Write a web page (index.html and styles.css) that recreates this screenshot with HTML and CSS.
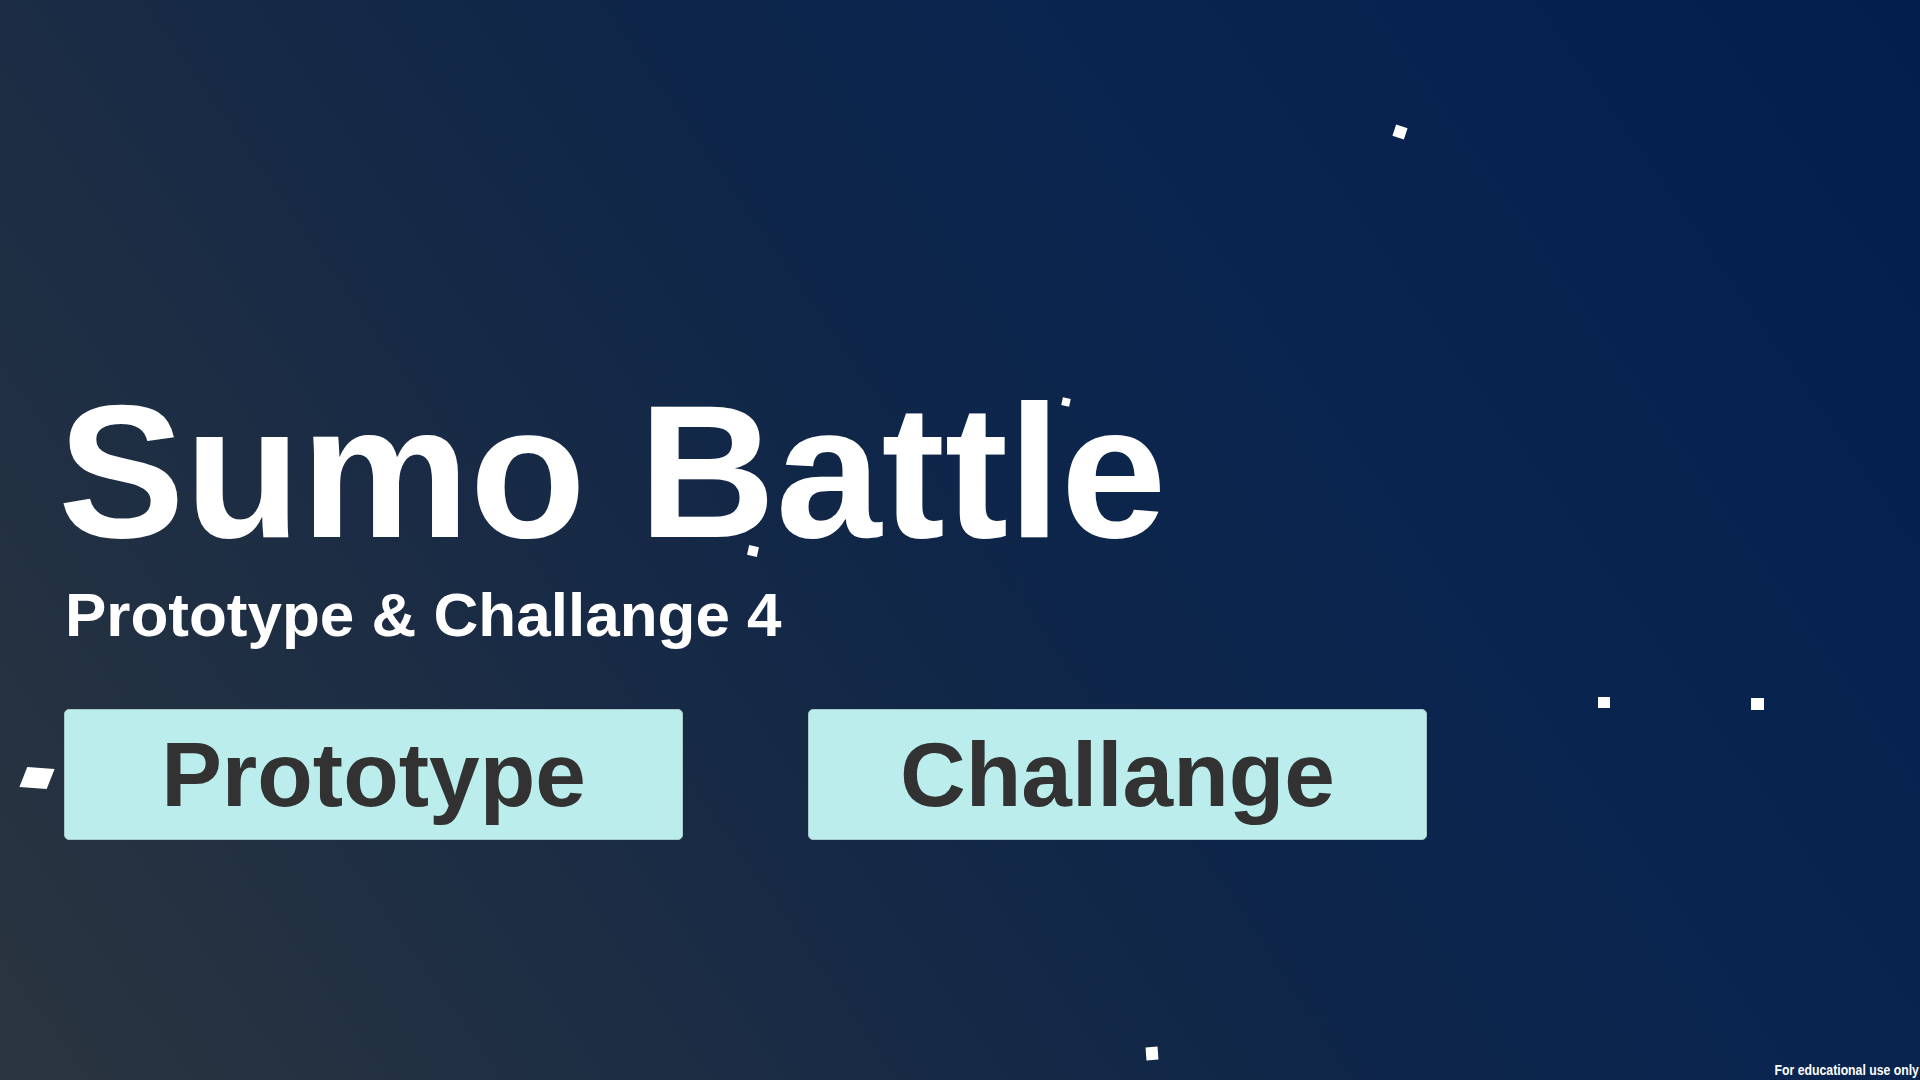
FILE: index.html
```html
<!DOCTYPE html>
<html lang="en">
<head>
<meta charset="utf-8">
<title>Sumo Battle</title>
<link rel="stylesheet" href="styles.css">
</head>
<body>
<div class="screen">
  <main class="menu">
    <h1 class="title">Sumo Battle</h1>
    <p class="subtitle">Prototype &amp; Challange 4</p>
    <div class="buttons">
      <button class="btn">Prototype</button>
      <button class="btn">Challange</button>
    </div>
  </main>

  <span class="particle p1"></span>
  <span class="particle p2"></span>
  <span class="particle p3"></span>
  <span class="particle p4"></span>
  <span class="particle p5"></span>
  <span class="particle p6"></span>
  <span class="particle p7"></span>

  <div class="watermark">For educational use only</div>
</div>
</body>
</html>
```

FILE: styles.css
```css
html, body {
  margin: 0;
  padding: 0;
}

body {
  width: 1920px;
  height: 1080px;
  overflow: hidden;
  font-family: "Liberation Sans", Arial, sans-serif;
}

.screen {
  position: relative;
  width: 1920px;
  height: 1080px;
  background: linear-gradient(55deg, #2a353f 0%, #1b2c44 28%, #0f2649 50%, #0a254f 66%, #021e4d 100%);
}

.menu {
  display: flex;
  flex-direction: column;
  align-items: flex-start;
  padding: 376px 0 0 64px;
}

.title {
  margin: 0 0 0 -6px;
  font-size: 190px;
  line-height: 1;
  font-weight: 700;
  color: #ffffff;
  white-space: nowrap;
}

.subtitle {
  margin: 18px 0 0 1px;
  font-size: 62px;
  line-height: 1;
  font-weight: 700;
  color: #ffffff;
  white-space: nowrap;
}

.buttons {
  display: flex;
  gap: 125px;
  margin-top: 63px;
}

.btn {
  display: flex;
  align-items: center;
  justify-content: center;
  width: 619px;
  height: 131px;
  padding: 0;
  box-sizing: border-box;
  background: #bbeded;
  border: 1px solid #a7c9cc;
  border-radius: 5px;
  font-family: "Liberation Sans", Arial, sans-serif;
  font-size: 91px;
  font-weight: 700;
  line-height: 1;
  color: #323232;
}

.particle {
  position: absolute;
  background: #ffffff;
  display: block;
}

.p1 { left: 1394px; top: 126px; width: 12px; height: 12px; transform: rotate(18deg); }
.p2 { left: 1062px; top: 398px; width: 8px; height: 8px; transform: rotate(12deg); }
.p3 { left: 748px; top: 546px; width: 10px; height: 10px; transform: rotate(12deg); }
.p4 { left: 23px; top: 768px; width: 28px; height: 20px; transform: skewX(-18deg) rotate(4deg); }
.p5 { left: 1598px; top: 697px; width: 12px; height: 11px; }
.p6 { left: 1751px; top: 698px; width: 13px; height: 12px; }
.p7 { left: 1146px; top: 1047px; width: 12px; height: 13px; transform: rotate(-4deg); }

.watermark {
  position: absolute;
  right: 1px;
  bottom: 3px;
  font-family: "Liberation Sans", sans-serif;
  font-size: 14px;
  font-weight: 700;
  color: #ffffff;
  line-height: 1;
  white-space: nowrap;
  transform: scaleX(0.875);
  transform-origin: right bottom;
}
```
